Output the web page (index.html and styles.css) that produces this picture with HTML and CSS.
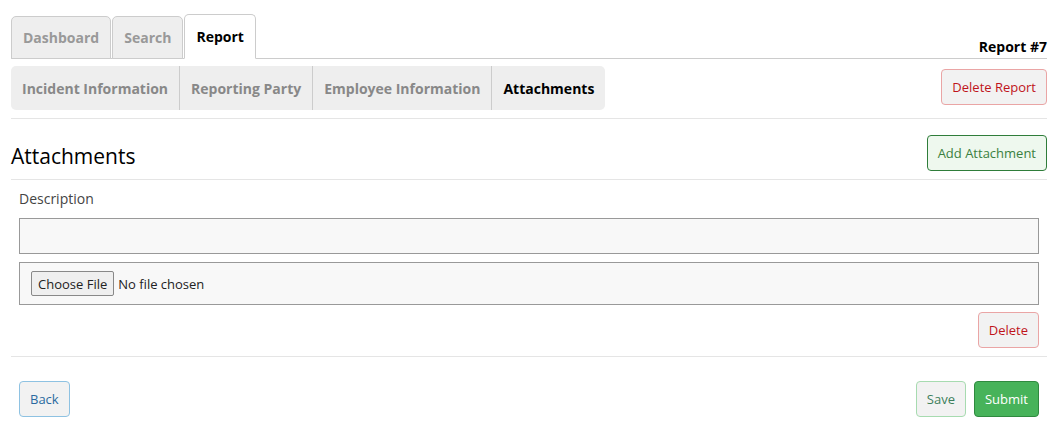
FILE: index.html
```html
<!DOCTYPE html>
<html>
<head>
<meta charset="utf-8">
<link rel="stylesheet" href="styles.css">
</head>
<body>
<div class="page">
  <div class="topbar">
    <div class="tabs">
      <div class="tab">Dashboard</div>
      <div class="tab">Search</div>
      <div class="tab active">Report</div>
    </div>
    <div class="report-no">Report #7</div>
  </div>
  <div class="subbar">
    <div class="subnav">
      <div class="subitem">Incident Information</div>
      <div class="subitem">Reporting Party</div>
      <div class="subitem">Employee Information</div>
      <div class="subitem current">Attachments</div>
    </div>
    <button class="btn btn-danger">Delete Report</button>
  </div>
  <div class="section-head">
    <h2 class="title">Attachments</h2>
    <button class="btn btn-success-outline">Add Attachment</button>
  </div>
  <div class="attachment">
    <label class="label">Description</label>
    <div class="text-input"></div>
    <div class="file-box"><span class="file-btn">Choose File</span><span class="file-text">No file chosen</span></div>
    <div class="row-end"><button class="btn btn-danger">Delete</button></div>
  </div>
  <div class="footer">
    <button class="btn btn-back">Back</button>
    <div class="footer-right">
      <button class="btn btn-save">Save</button>
      <button class="btn btn-submit">Submit</button>
    </div>
  </div>
</div>
</body>
</html>
```
FILE: styles.css
```css
* { box-sizing: border-box; }
html, body { margin: 0; padding: 0; background: #fff; }
body { font-family: "Open Sans", "Noto Sans", sans-serif; color: #333; }
.page { padding: 14px 15px 0 11px; }
.topbar { display: flex; justify-content: space-between; align-items: flex-end; border-bottom: 1px solid #ccc; height: 45px; }
.tabs { display: flex; align-items: flex-end; gap: 1px; height: 100%; }
.tab { height: 43px; margin-bottom: -1px; padding: 0 11px; display: flex; align-items: center; background: #eee; border: 1px solid #ccc; border-radius: 5px 5px 0 0; font-weight: 700; font-size: 14px; color: #999; }
.tab.active { height: 45px; background: #fff; color: #000; border-bottom-color: #fff; }
.report-no { font-weight: 700; font-size: 14px; color: #000; padding-bottom: 2px; }
.subbar { display: flex; justify-content: space-between; align-items: center; margin-top: 7px; padding-bottom: 8px; border-bottom: 1px solid #e5e5e5; }
.subnav { display: flex; background: #eee; border-radius: 5px; height: 44px; }
.subitem { display: flex; align-items: center; padding: 0 11px; font-weight: 700; font-size: 14px; color: #888; border-left: 1px solid #ccc; }
.subitem:first-child { border-left: none; }
.subitem.current { color: #000; }
.btn { font-family: inherit; font-size: 13px; height: 36px; padding: 0 10px; border-radius: 4px; border: 1px solid #ccc; background: #f2f2f2; cursor: pointer; }
.btn-danger { border-color: #eaa5a5; color: #c0141b; }
.subbar .btn-danger { margin-top: -2px; }
.section-head { display: flex; justify-content: space-between; align-items: center; padding: 16px 0 8px; border-bottom: 1px solid #e5e5e5; }
.title { margin: 6px 0 0; font-weight: 400; font-size: 21px; color: #000; line-height: 30px; }
.btn-success-outline { background: #eef8ee; border-color: #2f7d3a; color: #3b8040; }
.attachment { padding: 8px 8px 8px; border-bottom: 1px solid #e5e5e5; }
.label { display: block; font-size: 14px; color: #444; line-height: 22px; margin-bottom: 8px; }
.text-input { height: 36px; border: 1px solid #999; background: #f8f8f8; }
.file-box { margin-top: 8px; height: 43px; border: 1px solid #999; background: #f8f8f8; display: flex; align-items: center; padding: 0 11px; font-size: 13px; color: #222; }
.file-btn { height: 25px; padding: 0 6px; display: flex; align-items: center; border: 1px solid #888; border-radius: 2px; background: #efefef; margin-right: 4px; }
.row-end { display: flex; justify-content: flex-end; margin-top: 7px; }
.footer { display: flex; justify-content: space-between; padding: 24px 8px 0; }
.footer-right { display: flex; gap: 8px; }
.btn-back { border-color: #8ec2e2; color: #2a6aa0; }
.btn-save { border-color: #a7dbb0; color: #3d7f5c; }
.btn-submit { background: #47b35a; border-color: #2f8a3f; color: #fff; }
```
